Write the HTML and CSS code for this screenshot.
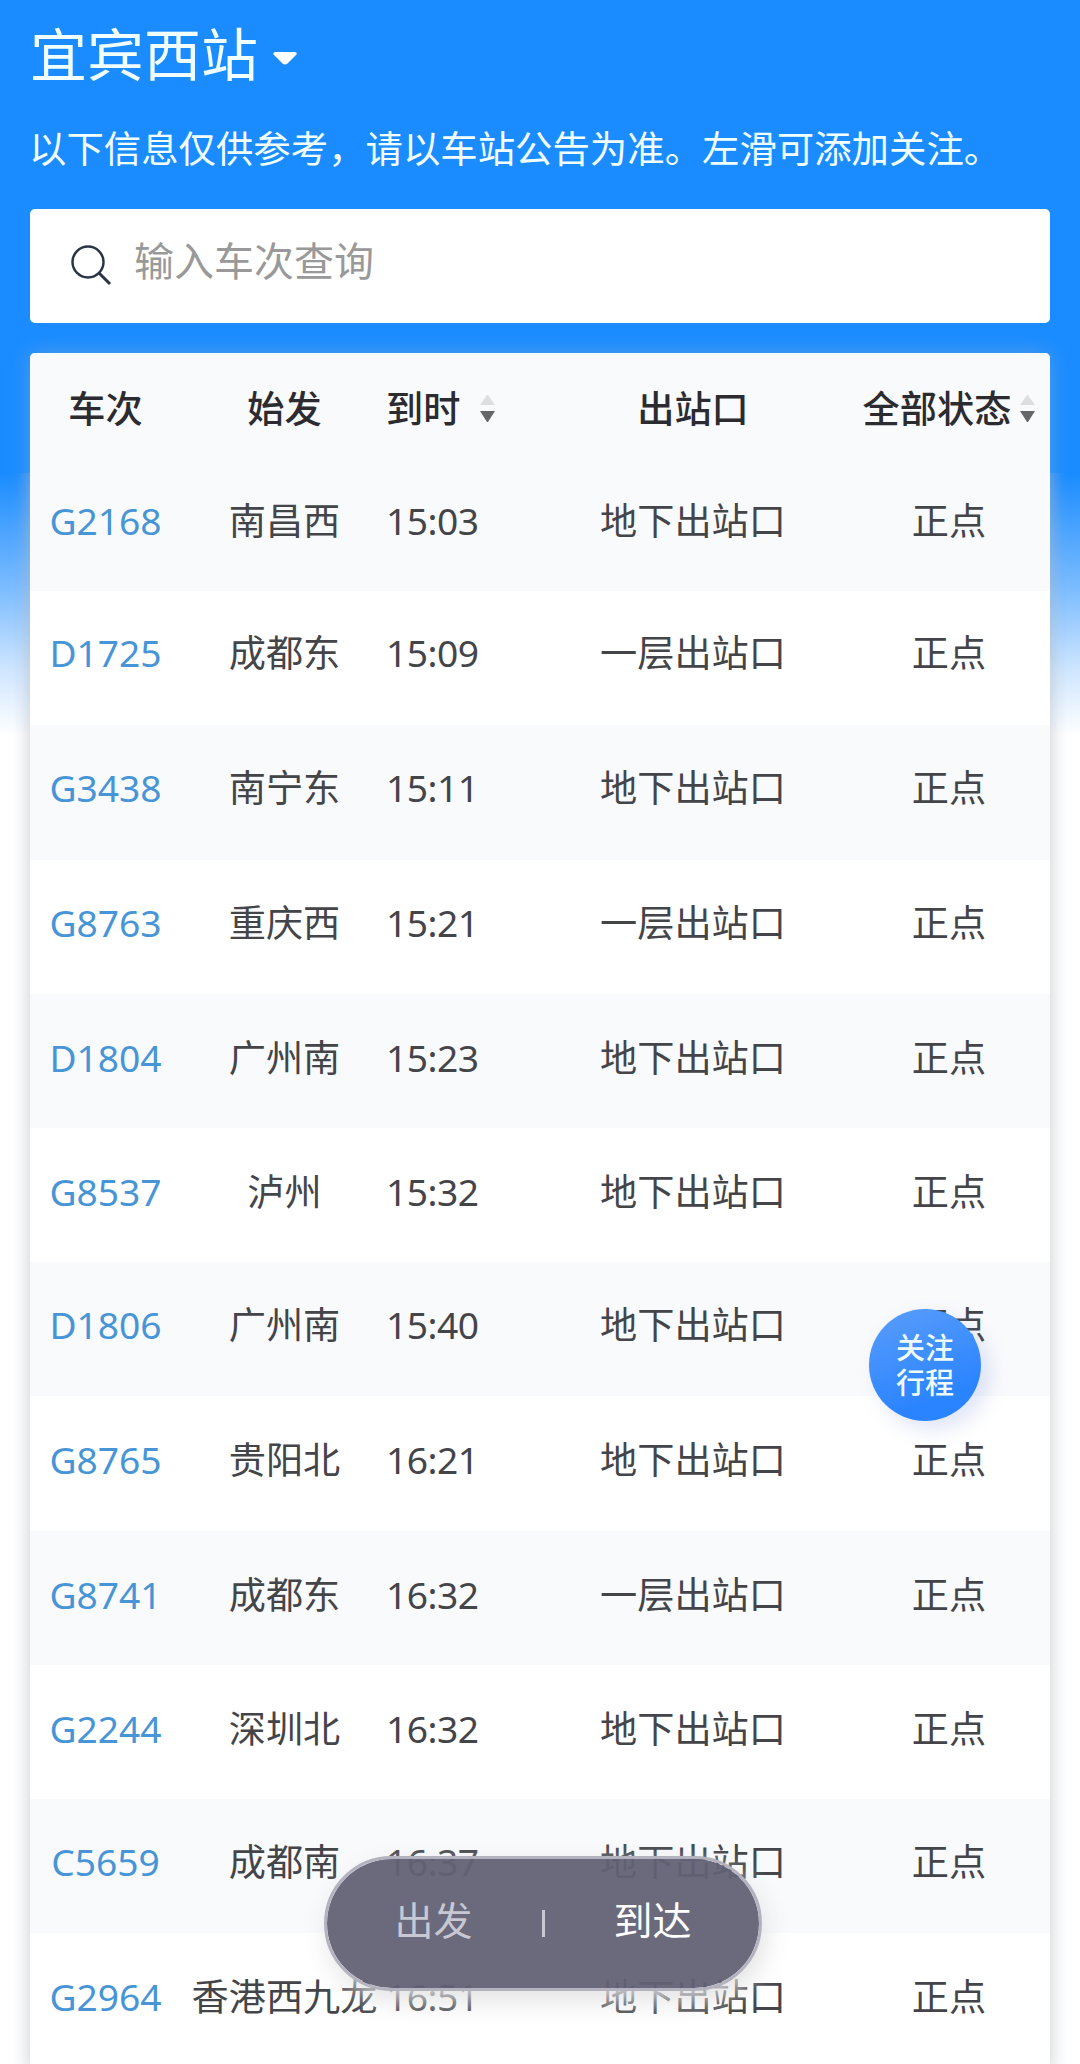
FILE: index.html
```html
<!DOCTYPE html>
<html lang="zh-CN">
<head>
  <meta charset="UTF-8" />
  <meta name="viewport" content="width=device-width, initial-scale=1.0" />
  <title>宜宾西站 - 车站大屏</title>
  <link rel="stylesheet" href="styles.css">
</head>
<body>
  <div class="page">
    <header>
      <h1 class="station">宜宾西站
        <svg class="caret" viewBox="0 0 24 13"><path d="M2 0h20q3 1 1 3l-8.500 8.500q-2.500 2-5 0L1 3q-2-2 1-3z" fill="#fff"/></svg>
      </h1>
      <p class="notice">以下信息仅供参考，请以车站公告为准。左滑可添加关注。</p>
      <div class="search">
        <svg class="search-icon" viewBox="0 0 42 42" fill="none" stroke="#2b3547" stroke-width="2.500"><circle cx="18" cy="18" r="15.500"/><path d="M29 29l11 11" stroke-width="3"/></svg>
        <span>输入车次查询</span>
      </div>
    </header>

    <main class="board">
      <div class="row head">
        <span>车次</span>
        <span>始发</span>
        <span class="time">到时 <i class="sort"></i></span>
        <span>出站口</span>
        <span class="all">全部状态 <i class="sort"></i></span>
      </div>
      <div class="list">
        <div class="row"><a>G2168</a><span>南昌西</span><span class="time">15:03</span><span>地下出站口</span><span>正点</span></div>
        <div class="row"><a>D1725</a><span>成都东</span><span class="time">15:09</span><span>一层出站口</span><span>正点</span></div>
        <div class="row"><a>G3438</a><span>南宁东</span><span class="time">15:11</span><span>地下出站口</span><span>正点</span></div>
        <div class="row"><a>G8763</a><span>重庆西</span><span class="time">15:21</span><span>一层出站口</span><span>正点</span></div>
        <div class="row"><a>D1804</a><span>广州南</span><span class="time">15:23</span><span>地下出站口</span><span>正点</span></div>
        <div class="row"><a>G8537</a><span>泸州</span><span class="time">15:32</span><span>地下出站口</span><span>正点</span></div>
        <div class="row"><a>D1806</a><span>广州南</span><span class="time">15:40</span><span>地下出站口</span><span>正点</span></div>
        <div class="row"><a>G8765</a><span>贵阳北</span><span class="time">16:21</span><span>地下出站口</span><span>正点</span></div>
        <div class="row"><a>G8741</a><span>成都东</span><span class="time">16:32</span><span>一层出站口</span><span>正点</span></div>
        <div class="row"><a>G2244</a><span>深圳北</span><span class="time">16:32</span><span>地下出站口</span><span>正点</span></div>
        <div class="row"><a>C5659</a><span>成都南</span><span class="time">16:37</span><span>地下出站口</span><span>正点</span></div>
        <div class="row"><a>G2964</a><span>香港西九龙</span><span class="time">16:51</span><span>地下出站口</span><span>正点</span></div>
      </div>
    </main>

    <div class="follow">关注<br>行程</div>
    <div class="switch"><span class="off">出发</span><i class="bar"></i><span>到达</span></div>
  </div>
</body>
</html>
```

FILE: styles.css
```css
* { box-sizing: border-box; }
body { margin: 0; font-family: "Noto Sans", "Noto Sans CJK SC", sans-serif; color: #444549; }
.page { position: relative; height: 2064px; padding: 0 30px; overflow: hidden; background: linear-gradient(#1a8cff 473px, #7dbdff 590px, #cfe6ff 670px, #fff 735px); }

header { height: 353px; color: #f2ffff; }
.station { display: flex; align-items: center; gap: 15px; height: 108px; margin: 0; font-size: 57px; font-weight: 400; line-height: 108px; }
.caret { width: 24px; height: 13px; margin-top: 9px; }
.notice { height: 101px; margin: 0 0 0 -1px; font-size: 37.400px; line-height: 81px; white-space: nowrap; }
.search { display: flex; align-items: center; gap: 22px; height: 114px; padding: 0 40px; border-radius: 5px; background: #fff; color: #999; font-size: 40px; }
.search span { margin-top: -14px; }
.search-icon { width: 42px; height: 42px; margin-top: -2px; flex: none; }

.board { height: 1730px; border-radius: 5px; background: #fff; box-shadow: 0 0 20px rgba(170,185,200,0.4); }
.row { display: grid; grid-template-columns: 151px 207px 150px 310px 202px; align-items: center; height: 134.200px; padding-bottom: 6px; font-size: 37.200px; line-height: 54px; text-align: center; white-space: nowrap; }
.row span, .row a { margin: 0 -20px; }
.row a { color: #4795d6; }
.row .time { margin: 0 0 0 -2px; text-align: left; letter-spacing: -0.500px; }
.row:nth-child(odd) { background: #f9fafc; }
/* side shadow starts just below the blue top area */
.list { height: 1607px; box-shadow: 0 0 16px rgba(190,190,190,0.45); clip-path: polygon(0 0, 100% 0, 100% 16px, calc(100% + 30px) 16px, calc(100% + 30px) 100%, -30px 100%, -30px 16px, 0 16px); }
.list .row:nth-child(2) { padding-bottom: 10px; }
.list .row:nth-child(3), .list .row:nth-child(4), .list .row:nth-child(7), .list .row:nth-child(11) { padding-bottom: 8px; }
.head { height: 104px; padding: 8px 0 0; border-radius: 5px 5px 0 0; color: #2b2b30; font-weight: 500; }
.head .time, .head .all { display: flex; align-items: center; gap: 20px; letter-spacing: 0; }
.head .all { justify-content: center; gap: 9px; }

/* sort arrows */
.sort { width: 15px; height: 27px; margin-top: -2px; }
.sort::before, .sort::after { content: ""; display: block; border: 7.500px solid transparent; }
.sort::before { border-top: 0; border-bottom: 10px solid #dedede; margin-bottom: 6px; }
.sort::after { border-bottom: 0; border-top: 11px solid #666; }

.follow { position: absolute; left: 869px; top: 1309px; width: 112px; height: 112px; padding-top: 21px; border-radius: 50%; background: linear-gradient(160deg, #5a9dfa, #2b84ff 75%); box-shadow: 8px 8px 20px rgba(110,130,220,0.22); color: #effcff; font-size: 29px; font-weight: 500; line-height: 35px; text-align: center; }
.switch { position: absolute; left: 324px; top: 1856px; display: flex; align-items: center; justify-content: center; gap: 69px; width: 438px; height: 135px; padding-bottom: 11px; border: 3px solid #b3b2be; border-radius: 68px; background: rgba(98,98,117,0.95); background-clip: padding-box; box-shadow: 4px 10px 24px rgba(225,225,228,0.95); color: #fff; font-size: 39px; }
.switch .off { color: #c8c8d4; }
.bar { width: 3px; height: 27px; margin-top: 10px; background: #c8c8d4; }
```
